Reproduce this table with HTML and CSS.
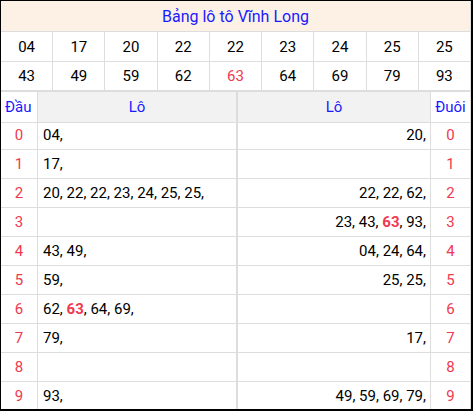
FILE: index.html
```html
<!DOCTYPE html>
<html lang="vi">
<head>
<meta charset="utf-8">
<title>Bảng lô tô Vĩnh Long</title>
<link rel="stylesheet" href="styles.css">
</head>
<body>
<div class="wrap">
  <div class="title">Bảng lô tô Vĩnh Long</div>
  <div class="nums">
    <div class="n">04</div><div class="n">17</div><div class="n">20</div><div class="n">22</div><div class="n">22</div><div class="n">23</div><div class="n">24</div><div class="n">25</div><div class="n">25</div>
    <div class="n r2">43</div><div class="n r2">49</div><div class="n r2">59</div><div class="n r2">62</div><div class="n r2 red">63</div><div class="n r2">64</div><div class="n r2">69</div><div class="n r2">79</div><div class="n r2">93</div>
  </div>
  <div class="lo">
    <div class="h dau">Đầu</div><div class="h lh mid">Lô</div><div class="h lh">Lô</div><div class="h duoi">Đuôi</div>

    <div class="d">0</div><div class="l mid">04,</div><div class="rr">20,</div><div class="d e">0</div>
    <div class="d">1</div><div class="l mid">17,</div><div class="rr"></div><div class="d e">1</div>
    <div class="d">2</div><div class="l mid">20, 22, 22, 23, 24, 25, 25,</div><div class="rr">22, 22, 62,</div><div class="d e">2</div>
    <div class="d">3</div><div class="l mid"></div><div class="rr">23, 43, <b>63</b>, 93,</div><div class="d e">3</div>
    <div class="d">4</div><div class="l mid">43, 49,</div><div class="rr">04, 24, 64,</div><div class="d e">4</div>
    <div class="d">5</div><div class="l mid">59,</div><div class="rr">25, 25,</div><div class="d e">5</div>
    <div class="d">6</div><div class="l mid">62, <b>63</b>, 64, 69,</div><div class="rr"></div><div class="d e">6</div>
    <div class="d">7</div><div class="l mid">79,</div><div class="rr">17,</div><div class="d e">7</div>
    <div class="d">8</div><div class="l mid"></div><div class="rr"></div><div class="d e">8</div>
    <div class="d">9</div><div class="l mid">93,</div><div class="rr">49, 59, 69, 79,</div><div class="d e">9</div>
  </div>
</div>
</body>
</html>
```
FILE: styles.css
```css
html, body {
  margin: 0;
  padding: 0;
  background: #fff;
}
body {
  font-family: Roboto, "Liberation Sans", Arial, sans-serif;
  font-size: 15px;
  color: #000;
}
.wrap {
  width: 473px;
  height: 411px;
  box-sizing: border-box;
  border-style: solid;
  border-color: #000;
  border-width: 1px 2px 2px 1px;
  overflow: hidden;
}
.title {
  height: 30px;
  background: #fdf1e6;
  border-bottom: 1px solid #ddd;
  border-right: 1px solid #ddd;
  color: #1a1aff;
  font-size: 16px;
  display: flex;
  align-items: center;
  justify-content: center;
}
.nums {
  display: grid;
  grid-template-columns: repeat(9, 1fr);
}
.n {
  height: 29px;
  border-right: 1px solid #ddd;
  border-bottom: 1px solid #ddd;
  display: flex;
  align-items: center;
  justify-content: center;
}
.n.r2 {
  height: 28px;
  border-bottom-width: 2px;
}
.red {
  color: #f0394f;
}
.lo {
  display: grid;
  grid-template-columns: 37px 200px 193px 40px;
  grid-auto-rows: 29px;
}
.lo > div {
  box-sizing: border-box;
  border-right: 1px solid #ddd;
  border-bottom: 1px solid #ddd;
  line-height: 28px;
  white-space: nowrap;
}
.lo > div.mid {
  border-right-width: 2px;
}
.lo > .h {
  height: 31px;
  line-height: 30px;
  text-align: center;
  color: #1a1aff;
}
.lo > .lh {
  background: #f2f2f2;
}
.lo > .dau {
  text-align: left;
  padding-left: 4px;
}
.d {
  text-align: center;
  color: #f0394f;
}
.l {
  padding-left: 5px;
}
.rr {
  text-align: right;
  padding-right: 4px;
}
.lo b {
  color: #f0394f;
  font-weight: 700;
}
```
